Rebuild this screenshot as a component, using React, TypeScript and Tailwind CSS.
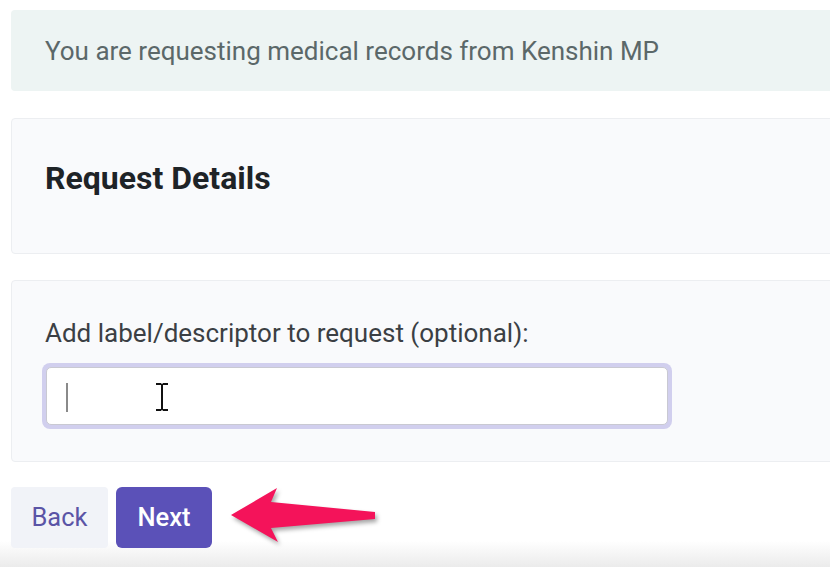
import React from "react";

export default function App() {
  return (
    <div className="relative w-[830px] h-[567px] overflow-hidden bg-white" style={{ fontFamily: "Roboto, 'Liberation Sans', sans-serif" }}>
      <div className="absolute left-0 right-0 bottom-0 h-[26px] bg-gradient-to-b from-[#ffffff] to-[#ebebeb]" />
      <div className="relative flex flex-col pl-[11px] pt-[10px]">
        <div className="h-[81px] w-[840px] rounded-[4px] bg-[#edf4f3] flex items-center pl-[34px] pt-[1px]">
          <span className="text-[26px] text-[#5b6869] leading-none">You are requesting medical records from Kenshin MP</span>
        </div>
        <div className="mt-[27px] h-[136px] w-[840px] rounded-[4px] border border-[#eceef1] bg-[#f9fafc] flex items-center pl-[33px] pb-[16px]">
          <h2 className="text-[32px] font-bold text-[#1e2327] leading-none">Request Details</h2>
        </div>
        <div className="mt-[26px] h-[182px] w-[840px] rounded-[4px] border border-[#eceef1] bg-[#f9fafc] pl-[30px] pt-[36px]">
          <div className="text-[26px] text-[#3b3f44] leading-[32px] pl-[3px]">Add label/descriptor to request (optional):</div>
          <div className="mt-[14px] w-[630px] h-[66px] rounded-[8px] bg-[#d1cfee] p-[4px]">
            <div className="relative h-full w-full rounded-[5px] border border-[#c9c9d2] bg-white">
              <div className="absolute left-[19px] top-[15px] h-[29px] w-[2px] bg-[#8a8a8a]" />
              <svg className="absolute left-[106px] top-[14px]" width="18" height="30" viewBox="0 0 18 30">
                <path d="M3 2h5M10 2h5M9 3v24M3 28h5M10 28h5M8 2.5q1 0 1 1M10 2.5q-1 0-1 1M8 27.5q1 0 1-1M10 27.5q-1 0-1-1" stroke="#111" strokeWidth="2" fill="none" />
              </svg>
            </div>
          </div>
        </div>
        <div className="mt-[25px] flex gap-[8px] items-start">
          <button className="h-[61px] w-[97px] rounded-[4px] bg-[#f1f3f8] text-[25.5px] text-[#5a54a6]">Back</button>
          <button className="h-[61px] w-[96px] rounded-[6px] bg-[#5b51b8] text-[25.5px] font-medium text-white">Next</button>
          <svg width="160" height="70" viewBox="0 0 160 70" className="ml-[2px] -mt-[5px]" style={{ filter: "drop-shadow(2px 3px 2px rgba(0,0,0,0.35))" }}>
            <polygon points="9,33 55,6 49,20 153,30 153,37 49,46 56,60" fill="#f4135a" />
          </svg>
        </div>
      </div>
    </div>
  );
}
